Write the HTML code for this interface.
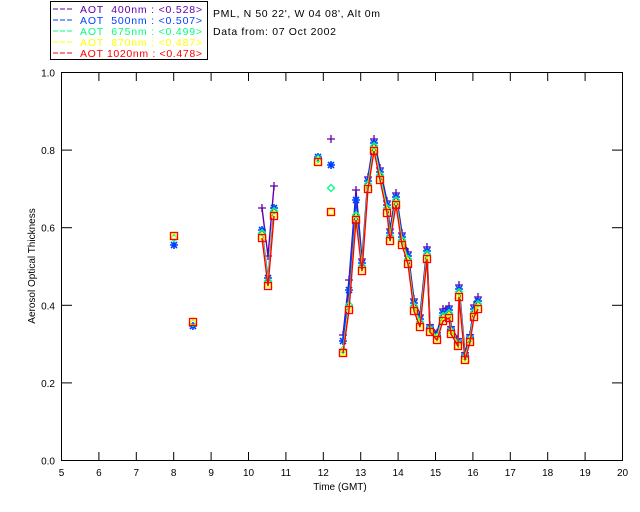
<!DOCTYPE html>
<html><head><meta charset="utf-8"><style>
html,body{margin:0;padding:0;background:#fff;}
svg{display:block;font-family:"Liberation Sans",sans-serif;font-size:10px;}
</style></head><body>
<svg id="s" width="640" height="512" xmlns="http://www.w3.org/2000/svg">
<rect width="640" height="512" fill="#fff"/>
<rect x="50.5" y="1.5" width="157" height="58" fill="none" stroke="#000"/>
<g font-size="10.5">
<line x1="53" y1="9" x2="73" y2="9" stroke="#6000a8" stroke-dasharray="5,2"/><text x="80" y="13" fill="#6000a8" textLength="122" xml:space="preserve">AOT  400nm : &lt;0.528&gt;</text>
<line x1="53" y1="20" x2="73" y2="20" stroke="#0040ff" stroke-dasharray="5,2"/><text x="80" y="24" fill="#0040ff" textLength="122" xml:space="preserve">AOT  500nm : &lt;0.507&gt;</text>
<line x1="53" y1="31" x2="73" y2="31" stroke="#00ff80" stroke-dasharray="5,2"/><text x="80" y="35" fill="#00ff80" textLength="122" xml:space="preserve">AOT  675nm : &lt;0.499&gt;</text>
<line x1="53" y1="42" x2="73" y2="42" stroke="#ffff00" stroke-dasharray="5,2"/><text x="80" y="46" fill="#ffff00" textLength="122" xml:space="preserve">AOT  870nm : &lt;0.487&gt;</text>
<line x1="53" y1="53" x2="73" y2="53" stroke="#ff0000" stroke-dasharray="5,2"/><text x="80" y="57" fill="#ff0000" textLength="122" xml:space="preserve">AOT 1020nm : &lt;0.478&gt;</text>
<text x="213" y="17" fill="#000" textLength="167">PML, N 50 22', W 04 08', Alt 0m</text>
<text x="213" y="35" fill="#000" textLength="123">Data from: 07 Oct 2002</text>
</g>
<rect x="61.5" y="72.5" width="561" height="388" fill="none" stroke="#000"/>
<g id="ax" stroke="#000"></g>
<g id="lab" fill="#000" font-size="10"></g>
<text x="340" y="490" text-anchor="middle" font-size="10">Time (GMT)</text>
<text transform="translate(35,266) rotate(-90)" text-anchor="middle" font-size="10">Aerosol Optical Thickness</text>
<g id="d"></g>
</svg>
<script>
var NS="http://www.w3.org/2000/svg";
function el(p,t,a,txt){var e=document.createElementNS(NS,t);for(var k in a)e.setAttribute(k,a[k]);if(txt!=null)e.textContent=txt;p.appendChild(e);return e;}
var ax=document.getElementById('ax'),lab=document.getElementById('lab'),d=document.getElementById('d');
for(var i=5;i<=20;i++){var x=61.5+(i-5)*561/15;
 el(ax,'line',{x1:x,y1:460,x2:x,y2:452});el(ax,'line',{x1:x,y1:73,x2:x,y2:81});
 el(lab,'text',{x:x,y:476,'text-anchor':'middle'},String(i));}
for(var j=0;j<=5;j++){var y=460.5-j*388/5;
 el(ax,'line',{x1:62,y1:y,x2:72,y2:y});el(ax,'line',{x1:622,y1:y,x2:612,y2:y});
 el(lab,'text',{x:55,y:y+4,'text-anchor':'end'},(j*0.2).toFixed(1));}
var segs=[
 [[174,236]],[[193,322]],
 [[262,238],[268,286],[274,216]],
 [[318,162]],[[331,212]],
 [[343,353],[349,310],[356,220],[362,271],[368,189],[374,151],[380,180],[387,213],[390,241],[396,205],[402,245],[408,264],[414,311],[420,327],[427,259],[430,332],[437,340],[443,321],[449,318],[451,334],[458,346],[459,297],[465,360],[470,342],[474,317],[478,309]]
];
var ser=[
 {c:'#6000a8',off:-12,m:'plus'},
 {c:'#0040ff',off:-8,m:'star'},
 {c:'#00ff80',off:-5,m:'dia'},
 {c:'#ffff00',off:-2,m:'tri'},
 {c:'#ff0000',off:0,m:'sq'}];
var g0=[null,9,2,0,0],g1=[null,4,1,0,0],g3=[null,-5,-3,-1,0],g4=[-73,-47,-24,-1,0];
function mark(s,x,y){
 var g={stroke:s.c,fill:'none','stroke-width':1.3};
 if(s.m==='plus'){el(d,'path',Object.assign({d:'M'+(x-4)+' '+y+'h8M'+x+' '+(y-4)+'v8'},g));}
 else if(s.m==='star'){el(d,'path',Object.assign({d:'M'+(x-4)+' '+y+'h8M'+x+' '+(y-4)+'v8M'+(x-3)+' '+(y-3)+'l6 6M'+(x+3)+' '+(y-3)+'l-6 6'},g,{'stroke-width':1.6}));}
 else if(s.m==='dia'){el(d,'path',Object.assign({d:'M'+x+' '+(y-3.5)+'l3.5 3.5l-3.5 3.5l-3.5-3.5z'},g));}
 else if(s.m==='tri'){el(d,'path',Object.assign({d:'M'+x+' '+(y-4)+'l4 7h-8z'},g));}
 else {el(d,'rect',Object.assign({x:x-3.5,y:y-3.5,width:7,height:7},g));}
}
ser.forEach(function(s,si){
 segs.forEach(function(seg,gi){
  var arr=[g0,g1,null,g3,g4][gi];
  if(arr&&arr[si]===null)return;
  var pts=seg.map(function(p){var o=s.off;if(p[1]>330)o*=0.6;if(gi===5&&p[0]<360&&si<2)o*=2.5;if(gi===2&&si===0)o*=2.5;if(arr)o=arr[si];return [p[0],p[1]+o];});
  if(pts.length>1)el(d,'polyline',{points:pts.map(function(p){return p.join(',')}).join(' '),fill:'none',stroke:s.c,'stroke-width':1.4});
  pts.forEach(function(p){mark(s,p[0],p[1]);});
 });
});
</script>
</body></html>
